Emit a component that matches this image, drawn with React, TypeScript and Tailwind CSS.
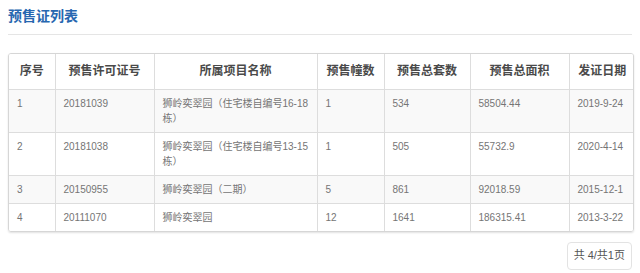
const rows = [
  { no: '1', permit: '20181039', project: '狮岭奕翠园（住宅楼自编号16-18栋）', buildings: '1', units: '534', area: '58504.44', date: '2019-9-24' },
  { no: '2', permit: '20181038', project: '狮岭奕翠园（住宅楼自编号13-15栋）', buildings: '1', units: '505', area: '55732.9', date: '2020-4-14' },
  { no: '3', permit: '20150955', project: '狮岭奕翠园（二期）', buildings: '5', units: '861', area: '92018.59', date: '2015-12-1' },
  { no: '4', permit: '20111070', project: '狮岭奕翠园', buildings: '12', units: '1641', area: '186315.41', date: '2013-3-22' },
];

const columns = [
  { label: '序号', width: 'w-[46px]' },
  { label: '预售许可证号', width: 'w-[99px]' },
  { label: '所属项目名称', width: 'w-[163px]' },
  { label: '预售幢数', width: 'w-[67px]' },
  { label: '预售总套数', width: 'w-[86px]' },
  { label: '预售总面积', width: 'w-[99px]' },
  { label: '发证日期', width: 'w-[66px]' },
];

export default function App() {
  return (
    <div className="w-[640px] h-[273px] bg-white px-[8px] pt-[6px] font-['Liberation_Sans','Noto_Sans_CJK_SC',sans-serif]">
      {/* Title */}
      <h2 className="text-[14px] leading-[20px] font-bold text-[#2767b0]">预售证列表</h2>
      <div className="mt-[8px] border-t border-[#e5e5e5]" />

      {/* Table */}
      <div className="mt-[18px] w-[626px] rounded-[3px] border border-[#d6d6d6] shadow-[0_1px_2px_rgba(0,0,0,0.12)] overflow-hidden">
        <table className="w-full table-fixed border-collapse text-[10px] text-[#757575]">
          <thead>
            <tr className="bg-white">
              {columns.map((c, i) => (
                <th
                  key={c.label}
                  className={`${c.width} h-[35px] px-[4px] text-center text-[12px] font-bold text-[#4a4a4a] border-b border-[#dddddd] ${i > 0 ? 'border-l' : ''}`}
                >
                  {c.label}
                </th>
              ))}
            </tr>
          </thead>
          <tbody>
            {rows.map((r, idx) => (
              <tr key={r.no} className={idx % 2 === 0 ? 'bg-[#f9f9f9]' : 'bg-white'}>
                {[r.no, r.permit, r.project, r.buildings, r.units, r.area, r.date].map((v, i) => (
                  <td
                    key={i}
                    className={`px-[8px] py-[6px] leading-[15px] align-top text-left border-[#dddddd] ${idx < rows.length - 1 ? 'border-b' : ''} ${i > 0 ? 'border-l' : ''}`}
                  >
                    {v}
                  </td>
                ))}
              </tr>
            ))}
          </tbody>
        </table>
      </div>

      {/* Pagination */}
      <div className="mt-[10px] flex justify-end w-[624px]">
        <div className="h-[28px] px-[6px] flex items-center rounded-[4px] border border-[#e3e3e3] text-[11px] text-[#555]">
          共 4/共1页
        </div>
      </div>
    </div>
  );
}
